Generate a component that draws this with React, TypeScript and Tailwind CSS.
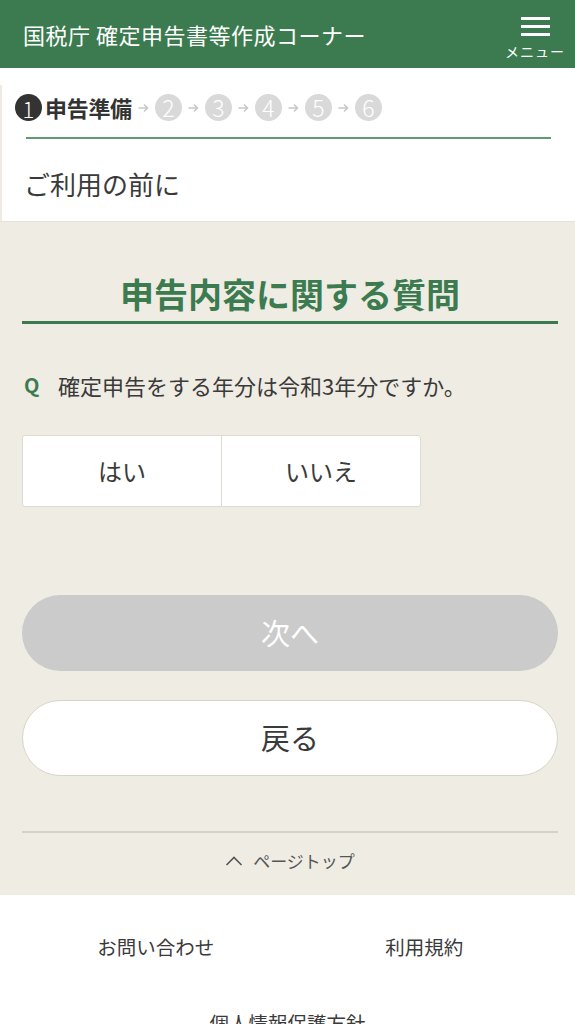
import React from 'react';

const font = { fontFamily: '"Noto Sans CJK JP", "Noto Sans", sans-serif' };

const Arrow: React.FC = () => (
  <svg width="11" height="10" viewBox="0 0 11 10" className="mx-[6px]">
    <path d="M0.5 5h9M6 1.5L9.5 5L6 8.5" fill="none" stroke="#c8c8c8" strokeWidth="1.6" />
  </svg>
);

const StepCircle: React.FC<{ n: number }> = ({ n }) => (
  <span className="w-[27px] h-[27px] rounded-full bg-[#d9d9d9] text-white text-[23px] font-light leading-none flex items-center justify-center">
    {n}
  </span>
);

const App: React.FC = () => {
  return (
    <div className="w-[575px] min-h-[1024px] bg-[#efece4] text-[#333]" style={font}>
      {/* header */}
      <header className="h-[68px] bg-[#3b7b4f] flex items-center justify-between pl-[23px] pr-[10px]">
        <h1 className="text-white text-[22px] tracking-[0.5px]">国税庁 確定申告書等作成コーナー</h1>
        <div className="flex flex-col items-center pt-[10px]">
          <div className="flex flex-col gap-[5px] w-[29px]">
            <span className="h-[3px] bg-white" />
            <span className="h-[3px] bg-white" />
            <span className="h-[3px] bg-white" />
          </div>
          <span className="text-white text-[14px] tracking-[1px] mt-[5px]">メニュー</span>
        </div>
      </header>

      {/* step panel */}
      <section className="bg-white pt-[17px] border-b border-[#e6e3db]">
        <div className="border-l-2 border-[#efebe3]">
          <div className="flex items-center h-[40px] pl-[13px] pt-[5px]">
            <span className="w-[27px] h-[27px] rounded-full bg-[#333] text-white text-[22px] font-light leading-none flex items-center justify-center">
              1
            </span>
            <span className="text-[22px] font-bold ml-[3px] tracking-[-0.3px]">申告準備</span>
            {[2, 3, 4, 5, 6].map((n) => (
              <React.Fragment key={n}>
                <Arrow />
                <StepCircle n={n} />
              </React.Fragment>
            ))}
          </div>
          <div className="h-[2px] bg-[#5f9b71] ml-[24px] mr-[24px] mt-[12px]" />
          <p className="text-[26px] pl-[22px] pt-[23px] pb-[15px] leading-[44px] text-[#3a3a3a]">ご利用の前に</p>
        </div>
      </section>

      {/* main */}
      <main className="pl-[22px] pr-[17px]">
        <h2 className="text-center text-[#3b7b4f] text-[34px] font-bold pt-[48px] pb-[3px] leading-[48px]">
          申告内容に関する質問
        </h2>
        <div className="h-[3px] bg-[#3b7b4f]" />

        <p className="flex items-center mt-[43px] text-[22px] leading-[36px] text-[#3a3a3a]">
          <span className="text-[#3b7b4f] font-bold text-[20px] w-[36px] pl-[2px]">Q</span>
          確定申告をする年分は令和3年分ですか。
        </p>

        <div className="flex mt-[32px] w-[399px] h-[72px] bg-white border border-[#dedbd3] rounded-[3px]">
          <button className="flex-1 text-[24px] text-[#3a3a3a] border-r border-[#dedbd3]">はい</button>
          <button className="flex-1 text-[24px] text-[#3a3a3a]">いいえ</button>
        </div>

        <button className="mt-[88px] w-full h-[76px] rounded-full bg-[#cbcbcb] text-white text-[29px]">
          次へ
        </button>
        <button className="mt-[29px] w-full h-[76px] rounded-full bg-white border border-[#d9d4c6] text-[29px] text-[#3a3a3a]">
          戻る
        </button>

        <div className="mt-[55px] h-[2px] bg-[#d5d2ca]" />
        <div className="h-[62px] pb-[6px] flex items-center justify-center gap-[10px] text-[17px] text-[#555]">
          <svg width="18" height="10" viewBox="0 0 18 10">
            <path d="M1.5 9L9 1.5L16.5 9" fill="none" stroke="#555" strokeWidth="1.6" />
          </svg>
          <span>ページトップ</span>
        </div>
      </main>

      {/* footer */}
      <footer className="bg-white pt-[34px] pb-[20px] px-[24px] text-[19.5px] text-[#3a3a3a]">
        <div className="grid grid-cols-2 text-center leading-[36px]">
          <a>お問い合わせ</a>
          <a className="pl-[10px]">利用規約</a>
        </div>
        <div className="text-center mt-[40px] leading-[36px]">個人情報保護方針</div>
      </footer>
    </div>
  );
};

export default App;
